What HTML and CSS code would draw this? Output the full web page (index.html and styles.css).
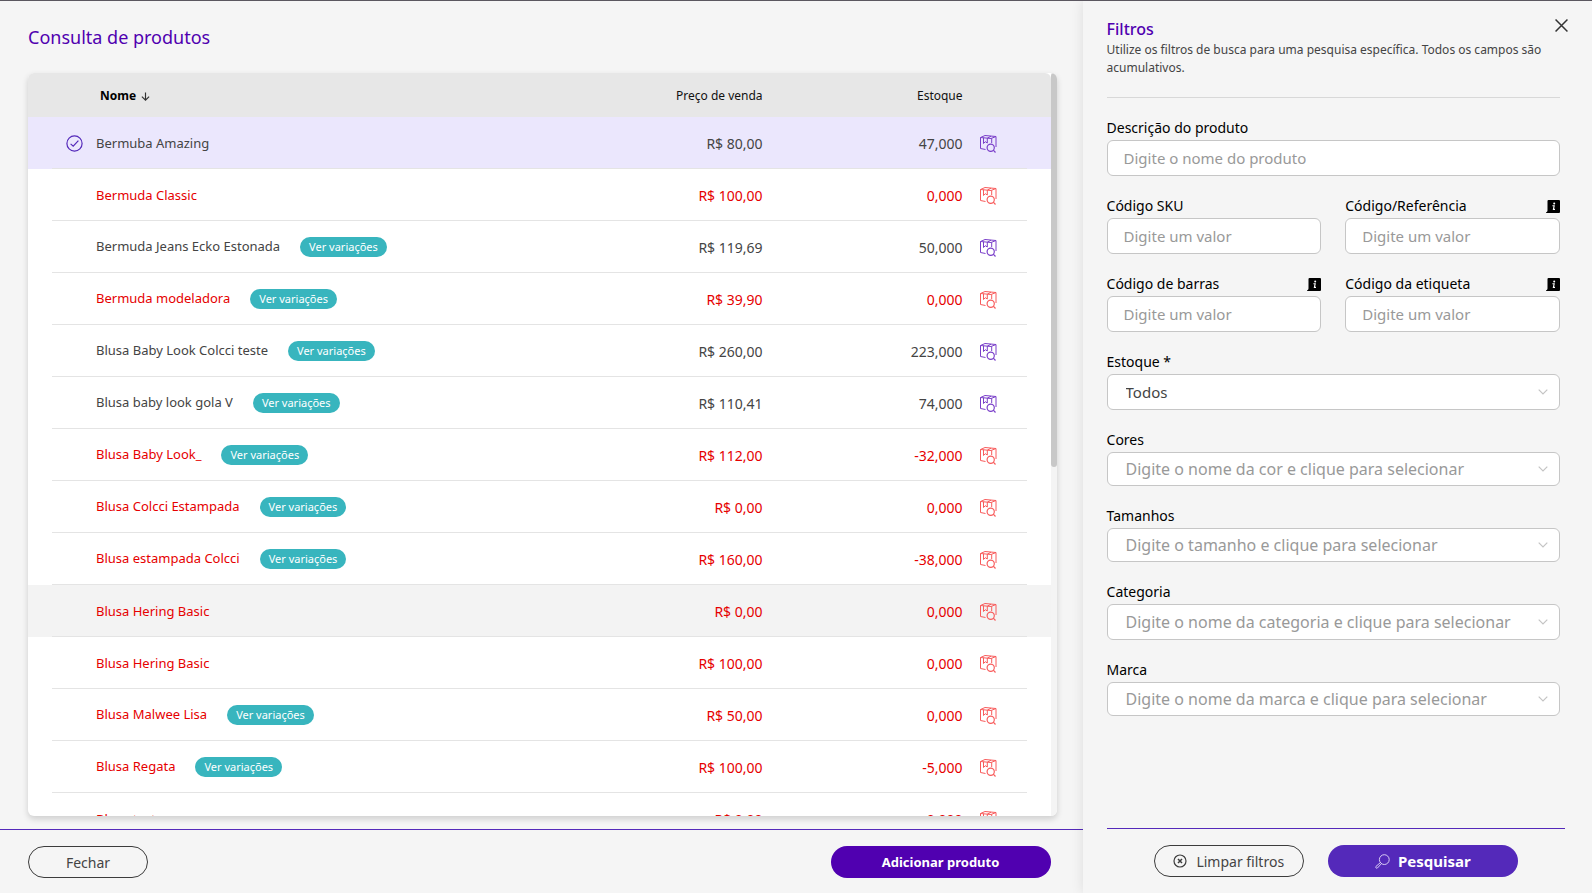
FILE: index.html
```html
<!DOCTYPE html>
<html lang="pt-BR">
<head>
<meta charset="utf-8">
<meta name="viewport" content="width=device-width, initial-scale=1">
<title>Consulta de produtos</title>
<link rel="stylesheet" href="styles.css">
</head>
<body>
<svg class="sprite" aria-hidden="true">
  <symbol id="box" viewBox="0 0 18 19">
    <g fill="none" stroke="currentColor" stroke-linejoin="round">
      <path d="M1.500 3.500V14.500L6.500 15.500M1.500 3.500L6 1.500L17 2.500V13M1.500 3.500L12 4.500L17 2.500M12.700 4.500V9"/>
      <path d="M4.500 3.700V9.500L6.300 7.700L8.300 9V4.200L12 2.200"/>
      <circle cx="11.700" cy="13.700" r="3.600" stroke-width="1.200"/>
      <path d="M14.300 16.200L16.500 18.500" stroke-width="1.200"/>
    </g>
  </symbol>
  <symbol id="info" viewBox="0 0 14 13">
    <path d="M2.500 0H13Q14 0 14 1V12Q14 13 13 13H0.500Q0 13 0 12.300Q1.500 12 1.500 10.500V1Q1.500 0 2.500 0Z" fill="#000"/>
    <circle cx="8.200" cy="3.400" r="1" fill="#fff"/>
    <path d="M6.400 5.700H8.200L7.400 9.400H9" fill="none" stroke="#fff" stroke-width="1.100"/>
  </symbol>
  <symbol id="chevron" viewBox="0 0 10 6">
    <path d="M0.700 0.700L5 5L9.300 0.700" fill="none" stroke="#c4c4c4" stroke-width="1.200"/>
  </symbol>
</svg>
<div class="page">
  <main class="products">
    <h1 class="title">Consulta de produtos</h1>
    <section class="card">
      <div class="scroll">
        <table class="table">
          <colgroup><col class="col-check"><col><col class="col-price"><col class="col-stock"><col class="col-action"></colgroup>
          <thead>
            <tr>
              <th></th>
              <th class="sorted">Nome <svg class="arrow" viewBox="0 0 10 10"><path d="M5 0.500V9M1 5.200L5 9L9 5.200" fill="none" stroke="#333" stroke-width="1.300"/></svg></th>
              <th class="num">Preço de venda</th>
              <th class="num">Estoque</th>
              <th></th>
            </tr>
          </thead>
          <tbody>
            <tr class="selected"><td class="check"><svg viewBox="0 0 17 17"><g fill="none" stroke="#5429ba" stroke-width="1.200"><circle cx="8.500" cy="8.500" r="7.600"/><path d="M4.600 8.900L7.200 11.200L12.400 5.600"/></g></svg></td><td>Bermuba Amazing</td><td class="num">R$ 80,00</td><td class="num">47,000</td><td><button class="detail" aria-label="Ver estoque"><svg><use href="#box"/></svg></button></td></tr>
            <tr class="out"><td></td><td>Bermuda Classic</td><td class="num">R$ 100,00</td><td class="num">0,000</td><td><button class="detail" aria-label="Ver estoque"><svg><use href="#box"/></svg></button></td></tr>
            <tr><td></td><td>Bermuda Jeans Ecko Estonada<button class="badge">Ver variações</button></td><td class="num">R$ 119,69</td><td class="num">50,000</td><td><button class="detail" aria-label="Ver estoque"><svg><use href="#box"/></svg></button></td></tr>
            <tr class="out"><td></td><td>Bermuda modeladora<button class="badge">Ver variações</button></td><td class="num">R$ 39,90</td><td class="num">0,000</td><td><button class="detail" aria-label="Ver estoque"><svg><use href="#box"/></svg></button></td></tr>
            <tr><td></td><td>Blusa Baby Look Colcci teste<button class="badge">Ver variações</button></td><td class="num">R$ 260,00</td><td class="num">223,000</td><td><button class="detail" aria-label="Ver estoque"><svg><use href="#box"/></svg></button></td></tr>
            <tr><td></td><td>Blusa baby look gola V<button class="badge">Ver variações</button></td><td class="num">R$ 110,41</td><td class="num">74,000</td><td><button class="detail" aria-label="Ver estoque"><svg><use href="#box"/></svg></button></td></tr>
            <tr class="out"><td></td><td>Blusa Baby Look_<button class="badge">Ver variações</button></td><td class="num">R$ 112,00</td><td class="num">-32,000</td><td><button class="detail" aria-label="Ver estoque"><svg><use href="#box"/></svg></button></td></tr>
            <tr class="out"><td></td><td>Blusa Colcci Estampada<button class="badge">Ver variações</button></td><td class="num">R$ 0,00</td><td class="num">0,000</td><td><button class="detail" aria-label="Ver estoque"><svg><use href="#box"/></svg></button></td></tr>
            <tr class="out"><td></td><td>Blusa estampada Colcci<button class="badge">Ver variações</button></td><td class="num">R$ 160,00</td><td class="num">-38,000</td><td><button class="detail" aria-label="Ver estoque"><svg><use href="#box"/></svg></button></td></tr>
            <tr class="out active"><td></td><td>Blusa Hering Basic</td><td class="num">R$ 0,00</td><td class="num">0,000</td><td><button class="detail" aria-label="Ver estoque"><svg><use href="#box"/></svg></button></td></tr>
            <tr class="out"><td></td><td>Blusa Hering Basic</td><td class="num">R$ 100,00</td><td class="num">0,000</td><td><button class="detail" aria-label="Ver estoque"><svg><use href="#box"/></svg></button></td></tr>
            <tr class="out"><td></td><td>Blusa Malwee Lisa<button class="badge">Ver variações</button></td><td class="num">R$ 50,00</td><td class="num">0,000</td><td><button class="detail" aria-label="Ver estoque"><svg><use href="#box"/></svg></button></td></tr>
            <tr class="out"><td></td><td>Blusa Regata<button class="badge">Ver variações</button></td><td class="num">R$ 100,00</td><td class="num">-5,000</td><td><button class="detail" aria-label="Ver estoque"><svg><use href="#box"/></svg></button></td></tr>
            <tr class="out"><td></td><td>Blusa teste</td><td class="num">R$ 0,00</td><td class="num">0,000</td><td><button class="detail" aria-label="Ver estoque"><svg><use href="#box"/></svg></button></td></tr>
          </tbody>
        </table>
      </div>
      <div class="track"><div class="thumb"></div></div>
    </section>
    <footer class="actions">
      <button class="btn close-btn">Fechar</button>
      <button class="btn add-btn">Adicionar produto</button>
    </footer>
  </main>

  <aside class="filters">
    <header class="filters-head">
      <div class="filters-top">
        <h2 class="filters-title">Filtros</h2>
        <button class="dismiss" aria-label="Fechar filtros"><svg viewBox="0 0 12 12"><path d="M0.500 0.500L11.500 11.500M11.500 0.500L0.500 11.500" stroke="#333" stroke-width="1.400"/></svg></button>
      </div>
      <p class="filters-text">Utilize os filtros de busca para uma pesquisa específica. Todos os campos são acumulativos.</p>
    </header>
    <form class="form" id="filters">
      <div class="field wide">
        <label for="desc">Descrição do produto</label>
        <input id="desc" class="control" type="text" placeholder="Digite o nome do produto">
      </div>
      <div class="field">
        <label for="sku">Código SKU</label>
        <input id="sku" class="control" type="text" placeholder="Digite um valor">
      </div>
      <div class="field">
        <label for="ref">Código/Referência <svg class="info"><use href="#info"/></svg></label>
        <input id="ref" class="control" type="text" placeholder="Digite um valor">
      </div>
      <div class="field">
        <label for="bar">Código de barras <svg class="info"><use href="#info"/></svg></label>
        <input id="bar" class="control" type="text" placeholder="Digite um valor">
      </div>
      <div class="field">
        <label for="tag">Código da etiqueta <svg class="info"><use href="#info"/></svg></label>
        <input id="tag" class="control" type="text" placeholder="Digite um valor">
      </div>
      <div class="field wide">
        <label for="stock">Estoque *</label>
        <div class="combo"><select id="stock" class="control"><option>Todos</option></select><svg class="chevron"><use href="#chevron"/></svg></div>
      </div>
      <div class="field wide">
        <label for="color">Cores</label>
        <div class="combo"><input id="color" class="control short" type="text" placeholder="Digite o nome da cor e clique para selecionar"><svg class="chevron"><use href="#chevron"/></svg></div>
      </div>
      <div class="field wide">
        <label for="size">Tamanhos</label>
        <div class="combo"><input id="size" class="control short" type="text" placeholder="Digite o tamanho e clique para selecionar"><svg class="chevron"><use href="#chevron"/></svg></div>
      </div>
      <div class="field wide">
        <label for="cat">Categoria</label>
        <div class="combo"><input id="cat" class="control" type="text" placeholder="Digite o nome da categoria e clique para selecionar"><svg class="chevron"><use href="#chevron"/></svg></div>
      </div>
      <div class="field wide">
        <label for="brand">Marca</label>
        <div class="combo"><input id="brand" class="control short" type="text" placeholder="Digite o nome da marca e clique para selecionar"><svg class="chevron"><use href="#chevron"/></svg></div>
      </div>
    </form>
    <footer class="filters-actions">
      <button class="btn clear-btn" type="reset" form="filters"><svg viewBox="0 0 14 14"><g fill="none" stroke="#3c3c3c"><circle cx="7" cy="7" r="6" stroke-width="1.200"/><path d="M5 5L9 9M9 5L5 9" stroke-width="1.500"/></g></svg>Limpar filtros</button>
      <button class="btn search-btn" type="submit" form="filters"><svg viewBox="0 0 15 15"><g fill="none" stroke="#d9ccf5" stroke-width="1"><circle cx="9.300" cy="5.600" r="4.900"/><path d="M5.600 8.400L0.900 12.500Q0.500 13.300 1 13.900Q1.600 14.500 2.400 14L6.600 9.500"/></g></svg>Pesquisar</button>
    </footer>
  </aside>
</div>
</body>
</html>
```

FILE: styles.css
```css
* {
  box-sizing: border-box;
}

body {
  margin: 0;
  background: #f5f5f5;
  color: #444;
  font-family: "Noto Sans", "Open Sans", sans-serif;
  font-size: 13px;
}

button,
input,
select {
  font-family: inherit;
}

button {
  padding: 0;
  border: 0;
  background: none;
  color: inherit;
  cursor: pointer;
}

h1,
h2,
p {
  margin: 0;
}

.sprite {
  display: none;
}

.page {
  display: grid;
  grid-template-columns: minmax(0, 68fr) minmax(0, 32fr);
  height: 100vh;
  border-top: 1px solid #5b5760;
  overflow: hidden;
}

/* Product list */

.products {
  display: flex;
  flex-direction: column;
  min-height: 0;
}

.title {
  padding: 24px 28px;
  color: #5000b0;
  font-size: 18px;
  font-weight: 400;
  line-height: 24px;
}

.card {
  display: flex;
  flex: 1;
  min-height: 0;
  margin: 0 26px 13px 28px;
  border-radius: 6px;
  background: #fff;
  box-shadow: 0 3px 6px rgba(0, 0, 0, 0.16);
  overflow: hidden;
}

.scroll {
  flex: 1;
  overflow: hidden;
}

.track {
  width: 6px;
  background: #f4f4f4;
}

.thumb {
  height: 53%;
  border-radius: 3px;
  background: #c8c8c8;
}

.table {
  width: 100%;
  border-collapse: collapse;
  table-layout: fixed;
}

.col-check {
  width: 68px;
}

.col-price,
.col-stock {
  width: 200px;
}

.col-action {
  width: 88px;
}

.table th {
  height: 44px;
  padding: 0;
  background: #e7e7e7;
  color: #111;
  font-size: 12px;
  font-weight: 400;
  text-align: left;
}

.table th:last-child {
  border-top-right-radius: 6px;
}

.table th.sorted {
  padding-left: 4px;
  color: #000;
  font-weight: 700;
}

.arrow {
  width: 9px;
  height: 9px;
  margin-left: 2px;
  vertical-align: -1px;
}

.table td {
  height: 52px;
  padding: 0;
  white-space: nowrap;
}

.table th.num,
.table td.num {
  text-align: right;
}

.table td.num {
  font-size: 14px;
}

.table tbody tr {
  background: linear-gradient(#e4e4e4, #e4e4e4) center bottom / calc(100% - 48px) 1px no-repeat;
}

.table tbody tr.selected {
  background-color: #ebe7fd;
}

.table tbody tr.active {
  background-color: #f3f3f3;
}

.table tr.out {
  color: #e60000;
}

.check svg {
  display: block;
  width: 17px;
  height: 17px;
  margin-left: 38px;
}

.badge {
  height: 20px;
  margin-left: 20px;
  padding: 0 9px;
  border-radius: 10px;
  background: #38b5be;
  color: #fff;
  font-size: 11px;
  line-height: 20px;
}

.detail {
  display: block;
  margin-left: 16px;
  color: #7a3fc9;
}

.detail svg {
  display: block;
  width: 18px;
  height: 19px;
}

.out .detail {
  color: #f85c5c;
}

.btn {
  display: flex;
  align-items: center;
  justify-content: center;
  height: 32px;
  border-radius: 16px;
  font-size: 14px;
}

.actions {
  display: flex;
  justify-content: space-between;
  padding: 16px 32px 15px 28px;
  border-top: 1px solid #5429ba;
}

.close-btn {
  width: 120px;
  border: 1px solid #3c3c3c;
}

.add-btn {
  width: 220px;
  background: #5000b0;
  color: #fff;
  font-size: 13px;
  font-weight: 700;
}

/* Filter panel */

.filters {
  display: flex;
  flex-direction: column;
  min-height: 0;
  padding-left: 24px;
  background: #f5f5f5;
  box-shadow: 0 0 12px rgba(0, 0, 0, 0.1);
}

.filters-head {
  margin-right: 32px;
  padding: 16px 0 20px;
  border-bottom: 1px solid #d8d8d8;
}

.filters-top {
  display: flex;
  justify-content: space-between;
  margin-right: -8px;
}

.filters-title {
  color: #5000b0;
  font-size: 16px;
  font-weight: 500;
  line-height: 24px;
}

.dismiss {
  align-self: flex-start;
  padding-top: 2px;
}

.dismiss svg {
  display: block;
  width: 13px;
  height: 13px;
}

.filters-text {
  font-size: 12px;
  line-height: 18px;
}

.form {
  display: grid;
  flex: 1;
  grid-template-columns: 1fr 1fr;
  align-content: start;
  gap: 20px 24px;
  min-height: 0;
  margin-right: 32px;
  padding-top: 20px;
}

.field {
  display: flex;
  flex-direction: column;
  gap: 2px;
  min-width: 0;
}

.wide {
  grid-column: 1 / -1;
}

.field label {
  display: flex;
  align-items: center;
  justify-content: space-between;
  color: #000;
  font-size: 14px;
  font-weight: 400;
  line-height: 20px;
}

.info {
  width: 14px;
  height: 13px;
}

.control {
  width: 100%;
  height: 36px;
  padding: 0 16px;
  border: 1px solid #c6c6c6;
  border-radius: 6px;
  background: #fff;
  color: #444;
  font-size: 15px;
  appearance: none;
}

.control.short {
  height: 34px;
}

.control::placeholder {
  color: #999;
}

.combo {
  display: grid;
  align-items: center;
}

.combo > * {
  grid-area: 1 / 1;
}

.combo .control {
  padding: 0 32px 0 18px;
  font-size: 16px;
}

.combo select.control {
  font-size: 15px;
}

.chevron {
  justify-self: end;
  width: 10px;
  height: 6px;
  margin-right: 12px;
  pointer-events: none;
}

.filters-actions {
  display: flex;
  justify-content: center;
  gap: 24px;
  margin-right: 27px;
  padding: 16px 0;
  border-top: 1px solid #5429ba;
}

.clear-btn {
  gap: 9px;
  width: 150px;
  border: 1px solid #3c3c3c;
}

.clear-btn svg {
  width: 14px;
  height: 14px;
}

.search-btn {
  gap: 8px;
  width: 190px;
  background: #5429ba;
  color: #fff;
  font-size: 15px;
  font-weight: 700;
}

.search-btn svg {
  width: 15px;
  height: 15px;
}
```
